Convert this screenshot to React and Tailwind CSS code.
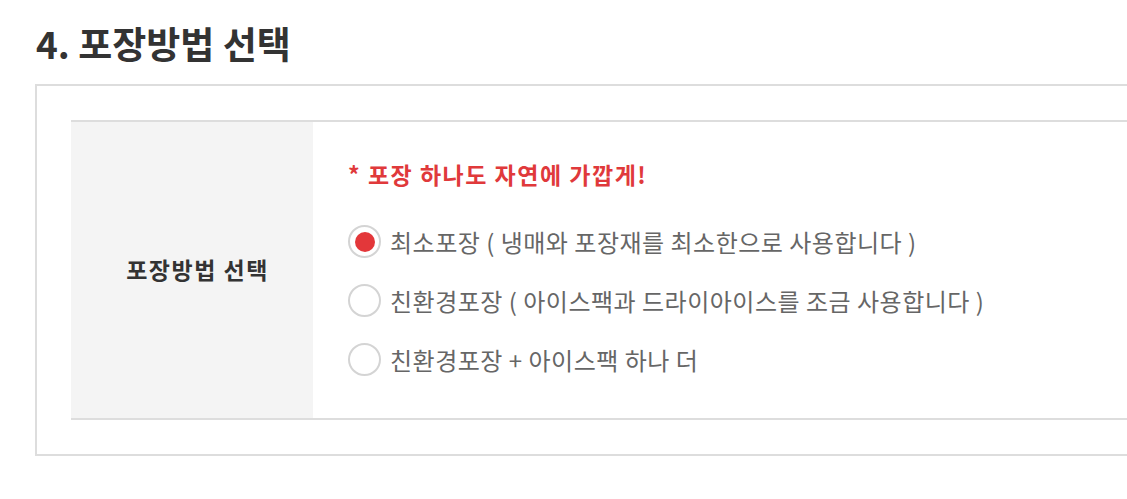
import React from "react";

const options = [
  { label: "최소포장 ( 냉매와 포장재를 최소한으로 사용합니다 )", checked: true },
  { label: "친환경포장 ( 아이스팩과 드라이아이스를 조금 사용합니다 )", checked: false },
  { label: "친환경포장 + 아이스팩 하나 더", checked: false },
];

function Radio({ checked }) {
  return (
    <span className="flex h-[33px] w-[33px] shrink-0 items-center justify-center rounded-full border-2 border-[#d4d4d4] bg-white">
      {checked && <span className="h-[20px] w-[20px] rounded-full bg-[#e3373a]" />}
    </span>
  );
}

export default function App() {
  return (
    <div
      className="h-[499px] w-[1127px] overflow-hidden bg-white pl-[35px] pt-[21px]"
      style={{ fontFamily: '"Noto Sans CJK KR", "Noto Sans", sans-serif' }}
    >
      <h2 className="mb-[19px] pl-[1px] text-[37px] font-bold leading-[44px] text-[#333]">
        4. 포장방법 선택
      </h2>
      <div className="w-[1200px] border-2 border-[#dddddd] px-[34px] py-[34px]">
        <div className="flex border-y-2 border-[#dddddd]">
          <div className="flex w-[242px] shrink-0 items-center justify-center bg-[#f4f4f4] pb-[2px] pl-[11px]">
            <span className="text-[23px] font-bold tracking-[1.5px] text-[#333]">포장방법 선택</span>
          </div>
          <div className="flex-1 pl-[35px] pt-[37px] pb-[29px]">
            <p className="mb-[23px] text-[23px] font-bold leading-[30px] tracking-[1.5px] text-[#e0393b]">
              * 포장 하나도 자연에 가깝게!
            </p>
            <div className="flex flex-col">
              {options.map((o) => (
                <label key={o.label} className="flex h-[59px] items-center gap-[9px]">
                  <Radio checked={o.checked} />
                  <span className="text-[24px] tracking-[0.5px] text-[#666]">{o.label}</span>
                </label>
              ))}
            </div>
          </div>
        </div>
      </div>
    </div>
  );
}
